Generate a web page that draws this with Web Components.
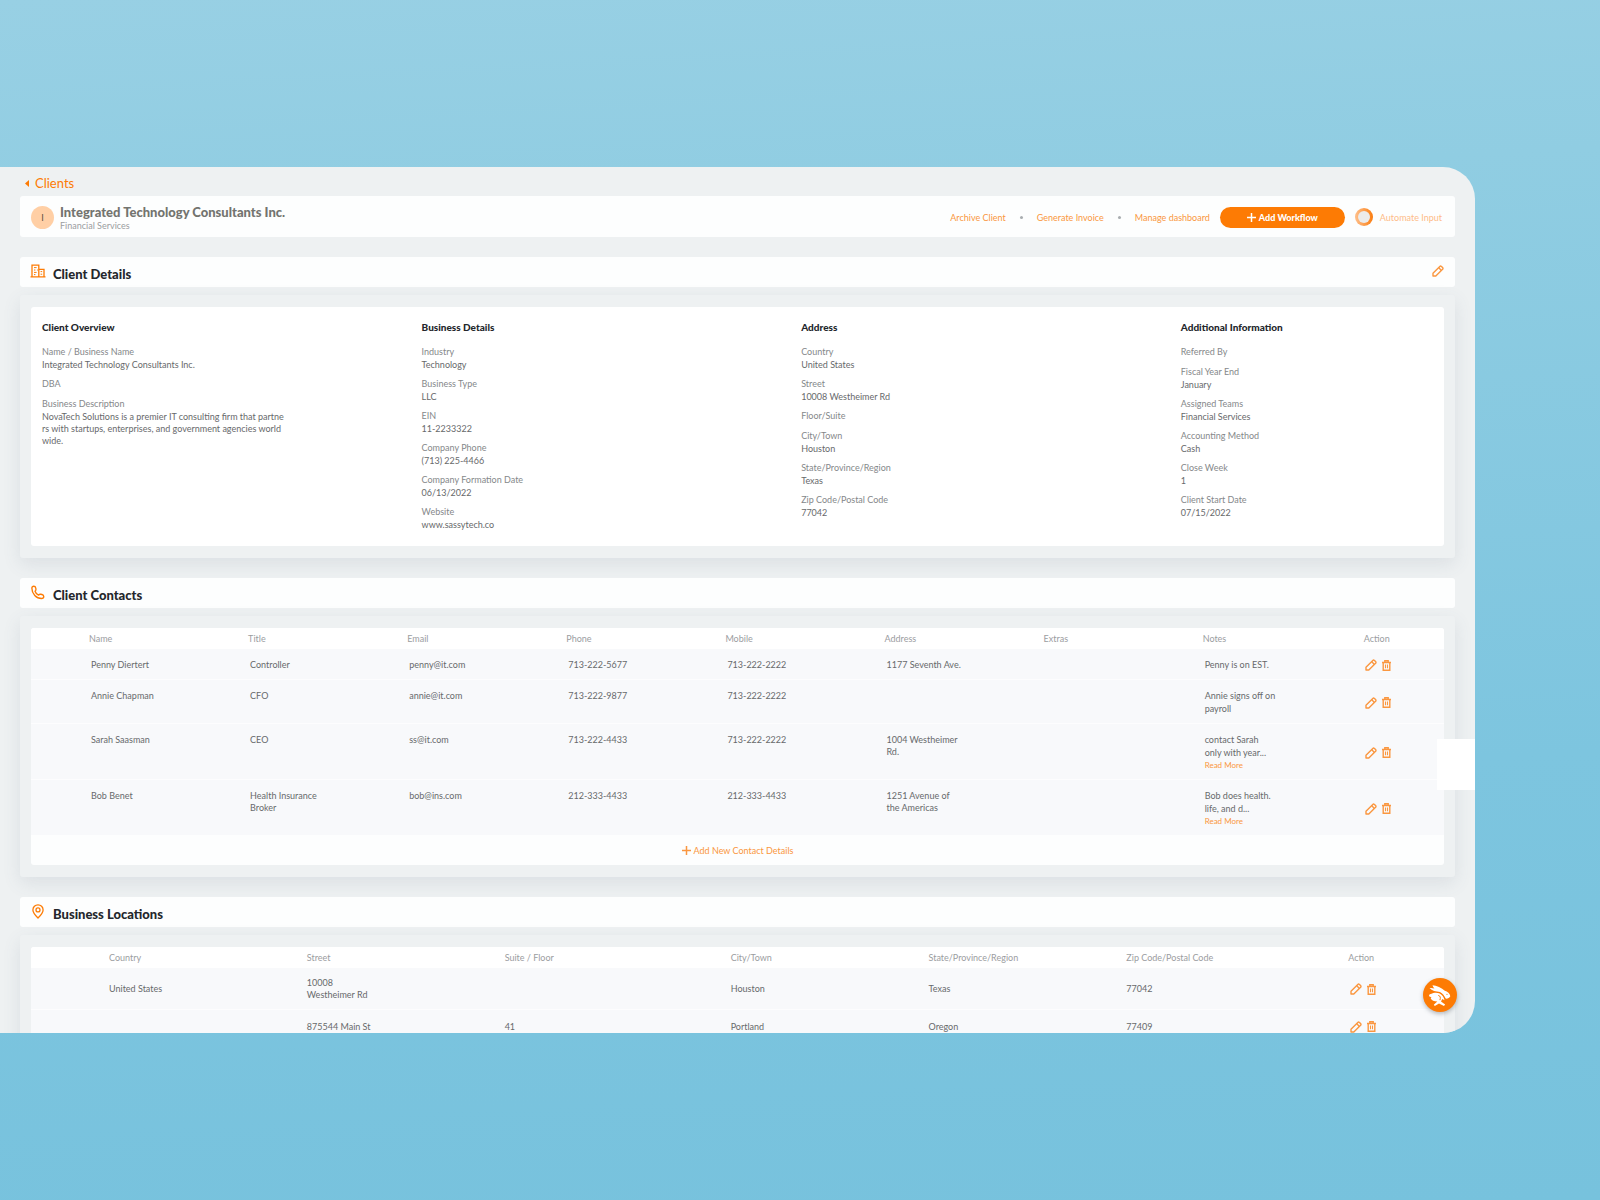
<!DOCTYPE html>
<html lang="en">
<head>
<meta charset="utf-8">
<title>Integrated Technology Consultants Inc.</title>
<style>
  :root {
    --orange: #fd7b04;
    --orange-soft: #fa9740;
    --page: #eef1f2;
    --card: #fdfefe;
    --row: #f8f9fb;
    --heading: #24272c;
    --text: #67696b;
    --label: #85888a;
    --muted: #9b9d9f;
  }

  html,
  body {
    height: 100%;
  }

  body {
    margin: 0;
    font-family: Lato, sans-serif;
    font-size: 9px;
    color: var(--text);
    background: linear-gradient(177deg, #98d0e4 0%, #90cde2 18%, #7dc5df 65%, #77c2dd 100%);
  }
</style>
</head>
<body>
<app-window>
  <client-header name="Integrated Technology Consultants Inc." team="Financial Services"></client-header>

  <section-block heading="Client Details" icon="building" editable>
    <client-details></client-details>
  </section-block>

  <section-block heading="Client Contacts" icon="phone">
    <contacts-table></contacts-table>
  </section-block>

  <section-block heading="Business Locations" icon="pin">
    <locations-table></locations-table>
  </section-block>
</app-window>

<script>
/**
 * Data shown on the client page.
 */
const details = [
  {
    title: 'Client Overview',
    items: [
      ['Name / Business Name', 'Integrated Technology Consultants Inc.'],
      ['DBA', ''],
      ['Business Description', 'NovaTech Solutions is a premier IT consulting firm that partners with startups, enterprises, and government agencies worldwide.'],
    ],
  },
  {
    title: 'Business Details',
    items: [
      ['Industry', 'Technology'],
      ['Business Type', 'LLC'],
      ['EIN', '11-2233322'],
      ['Company Phone', '(713) 225-4466'],
      ['Company Formation Date', '06/13/2022'],
      ['Website', 'www.sassytech.co'],
    ],
  },
  {
    title: 'Address',
    items: [
      ['Country', 'United States'],
      ['Street', '10008 Westheimer Rd'],
      ['Floor/Suite', ''],
      ['City/Town', 'Houston'],
      ['State/Province/Region', 'Texas'],
      ['Zip Code/Postal Code', '77042'],
    ],
  },
  {
    title: 'Additional Information',
    items: [
      ['Referred By', ''],
      ['Fiscal Year End', 'January'],
      ['Assigned Teams', 'Financial Services'],
      ['Accounting Method', 'Cash'],
      ['Close Week', '1'],
      ['Client Start Date', '07/15/2022'],
    ],
  },
];

const contacts = [
  { cells: ['Penny Diertert', 'Controller', 'penny@it.com', '713-222-5677', '713-222-2222', '1177 Seventh Ave.', ''], note: 'Penny is on EST.' },
  { cells: ['Annie Chapman', 'CFO', 'annie@it.com', '713-222-9877', '713-222-2222', '', ''], note: 'Annie signs off on payroll' },
  { cells: ['Sarah Saasman', 'CEO', 'ss@it.com', '713-222-4433', '713-222-2222', '1004 Westheimer Rd.', ''], note: 'contact Sarah only with year...', more: true },
  { cells: ['Bob Benet', 'Health Insurance Broker', 'bob@ins.com', '212-333-4433', '212-333-4433', '1251 Avenue of the Americas', ''], note: 'Bob does health. life, and d...', more: true },
];

const locations = [
  ['United States', '10008 Westheimer Rd', '', 'Houston', 'Texas', '77042'],
  ['', '875544 Main St', '41', 'Portland', 'Oregon', '77409'],
];

const icons = {
  building: `<svg viewBox="0 0 16 14" width="16" height="14" fill="none" stroke="currentColor" stroke-width="1.3">
    <path d="M.5 12.9h15M2 12.9V1.2h6.8v11.7M8.8 5.4h5.2v7.5"/>
    <path d="M4 3.6h2.6M4 6h1.4M4 8.4h2.6M4 10.6h1.4M7 6h.8M10.6 7.6h1.6M10.6 10.2h1.6" stroke-width="1"/></svg>`,
  phone: `<svg viewBox="0 0 24 24" width="15" height="15" fill="none" stroke="currentColor" stroke-width="2.2" stroke-linejoin="round">
    <path d="M3 5.2c0-2 1.3-3.2 3-3.2 1.8 0 2.9 1 3.2 2.8l.3 2.2c.2 1.5-.4 2.2-1.4 3.1.8 2.6 2.9 4.9 5.6 6 1-1.1 1.8-1.6 3.3-1.3l2.2.4c1.8.4 2.8 1.4 2.8 3.1 0 2-1.5 3.3-3.6 3.3C10.2 21.6 3 14.2 3 5.2z"/></svg>`,
  pin: `<svg viewBox="0 0 12 15" width="12" height="15" fill="none" stroke="currentColor" stroke-width="1.3" stroke-linejoin="round">
    <path d="M6 14C3 11 .9 8.7.9 5.9a5.1 5.1 0 0 1 10.2 0C11.1 8.7 9 11 6 14z"/><circle cx="6" cy="5.9" r="2"/></svg>`,
  pencil: `<svg viewBox="0 0 12 12" width="12" height="12" fill="none" stroke="currentColor" stroke-width="1.4" stroke-linejoin="round">
    <path d="M1 8.2 7.8 1.4q.8-.8 1.6 0l1.2 1.2q.8.8 0 1.6L3.8 11H1z"/><path d="m6.6 2.6 2.8 2.8"/></svg>`,
  trash: `<svg viewBox="0 0 9 11" width="9" height="11" fill="none" stroke="currentColor" stroke-width="1.4">
    <path d="M0 2.5h9M2.8 2.5V.8h3.4v1.7M1.2 2.5v7.7h6.6V2.5"/><path d="M3.5 4.6v3.6M5.5 4.6v3.6" stroke-width="1.1"/></svg>`,
  plus: `<svg viewBox="0 0 9 9" width="9" height="9" fill="none" stroke="currentColor" stroke-width="1.5"><path d="M4.5 0v9M0 4.5h9"/></svg>`,
  caret: `<svg viewBox="0 0 4 7" width="4" height="7" fill="currentColor"><path d="M4 0v7L0 3.5z"/></svg>`,
  rabbit: `<svg viewBox="0 0 34 34" width="34" height="34" fill="#fff">
    <path d="M9.5 7.2c4 .3 9.3 2.5 12.3 5.5 2.8.5 5 2.7 5.5 5.6-.8 1.7-2.7 2.5-4.6 2.3-1.1-2.7-3-5.4-5.8-6.7-3.900-.1-8-1-10.400-3.800 1.700-.3 3.300-.1 4.900.4-.9-1-1.600-2-1.900-3.300z"/>
    <path d="M6.2 18.2c-.4-1.300.3-2.300 1.700-2.200 2.500-1.500 6-1.800 8.300-.7 2.800 1.300 4.700 4 5.300 6.900l-2.200-1.300-1.300 2.500 4.100 3.200-1.100 1.300-5-2.500-4.200 2.500-1-1.200 3.500-3.300c-3.200 0-5.700-1-6.600-3.200.2-.5.4-.9.9-1.300-1 .2-1.900 0-2.400-.7z"/>
    <path d="M15.3 17.4c2.3.4 2.4 2.7 1.6 4.7" fill="none" stroke="#fd7b04"/>
    <circle cx="24" cy="16.3" r=".6" fill="#fd7b04"/></svg>`,
};

/**
 * Inline icon, picked by its name attribute.
 * @extends HTMLElement
 */
class AppIcon extends HTMLElement {
  connectedCallback() {
    this.attachShadow({ mode: 'open' }).innerHTML = `
      <style>
        :host { display: inline-flex; flex: none; }
        svg { display: block; }
      </style>
      ${icons[this.getAttribute('name')]}`;
  }
}
customElements.define('app-icon', AppIcon);

/**
 * Rounded application window with the back link and the floating controls.
 * @extends HTMLElement
 */
class AppWindow extends HTMLElement {
  connectedCallback() {
    this.attachShadow({ mode: 'open' }).innerHTML = `
      <style>
        :host {
          display: block;
          box-sizing: border-box;
          height: 100%;
          padding: 167px 125px 167px 0;
        }
        main {
          position: relative;
          box-sizing: border-box;
          height: 100%;
          padding: 0 20px;
          overflow: hidden;
          border-radius: 0 32px 32px 0;
          background: var(--page);
        }
        nav {
          display: flex;
          padding: 8px 5px 5px;
          line-height: 16px;
        }
        a {
          display: flex;
          align-items: center;
          gap: 6px;
          color: var(--orange);
          font-size: 13px;
          text-decoration: none;
        }
        .drawer {
          position: absolute;
          top: 572px;
          right: 0;
          width: 38px;
          height: 51px;
          border: 0;
          background: #fff;
        }
        .help {
          position: absolute;
          right: 18px;
          bottom: 21px;
          width: 34px;
          height: 34px;
          padding: 0;
          border: 0;
          border-radius: 50%;
          background: var(--orange);
          box-shadow: 0 2px 4px rgba(60, 70, 80, 0.35);
          cursor: pointer;
        }
      </style>
      <main>
        <nav><a href="#clients"><app-icon name="caret"></app-icon>Clients</a></nav>
        <slot></slot>
        <button class="drawer" type="button" aria-label="Open drawer"></button>
        <button class="help" type="button" aria-label="Help"><app-icon name="rabbit"></app-icon></button>
      </main>`;
  }
}
customElements.define('app-window', AppWindow);

/**
 * Title card with the client's name and the page actions.
 * @extends HTMLElement
 */
class ClientHeader extends HTMLElement {
  connectedCallback() {
    const name = this.getAttribute('name');
    this.attachShadow({ mode: 'open' }).innerHTML = `
      <style>
        :host {
          display: flex;
          align-items: center;
          height: 40px;
          padding: 1px 11px 0;
          border-radius: 3px;
          background: var(--card);
        }
        .avatar {
          width: 23px;
          margin-right: 6px;
          border-radius: 50%;
          background: #ffcfa5;
          color: #5c5040;
          line-height: 23px;
          text-align: center;
        }
        .who {
          flex: 1;
          padding-top: 2px;
        }
        h1 {
          margin: 0;
          color: #73746f;
          font-size: 13px;
          font-weight: 900;
          line-height: 16px;
        }
        p {
          margin: 0;
          color: var(--muted);
          line-height: 12px;
        }
        .links {
          display: flex;
          align-items: center;
          margin: 0 10px;
        }
        a {
          color: var(--orange-soft);
          text-decoration: none;
        }
        i {
          width: 3px;
          height: 3px;
          margin: 0 14px;
          border-radius: 50%;
          background: #a9adb0;
        }
        button {
          display: flex;
          align-items: center;
          justify-content: center;
          gap: 3px;
          width: 125px;
          height: 21px;
          padding: 0;
          border: 0;
          border-radius: 11px;
          background: var(--orange);
          color: #fff;
          font: 900 9px Lato, sans-serif;
        }
        label {
          display: flex;
          align-items: center;
          gap: 7px;
          margin-left: 10px;
          padding-right: 2px;
        }
        input {
          appearance: none;
          box-sizing: border-box;
          width: 18px;
          height: 18px;
          margin: 0;
          border: 3px solid transparent;
          border-radius: 50%;
          background: linear-gradient(#ecebea, #ecebea) padding-box, linear-gradient(90deg, #ffc08c, #fb7d10) border-box;
        }
        label span { color: #fdbc88; }
      </style>
      <div class="avatar">${name[0]}</div>
      <div class="who">
        <h1>${name}</h1>
        <p>${this.getAttribute('team')}</p>
      </div>
      <div class="links">
        <a href="#archive">Archive Client</a><i></i>
        <a href="#invoice">Generate Invoice</a><i></i>
        <a href="#dashboard">Manage dashboard</a>
      </div>
      <button type="button"><app-icon name="plus"></app-icon>Add Workflow</button>
      <label><input type="checkbox"><span>Automate Input</span></label>`;
  }
}
customElements.define('client-header', ClientHeader);

/**
 * Section title bar with a raised panel below it.
 * @extends HTMLElement
 */
class SectionBlock extends HTMLElement {
  connectedCallback() {
    this.attachShadow({ mode: 'open' }).innerHTML = `
      <style>
        :host {
          display: block;
          margin-top: 20px;
        }
        header {
          display: flex;
          align-items: center;
          height: 30px;
          padding: 0 11px 0 10px;
          border-radius: 3px;
          background: var(--card);
          color: var(--orange);
        }
        .icon {
          display: flex;
          justify-content: center;
          width: 15px;
          margin-right: 8px;
          padding-bottom: 2px;
        }
        h2 {
          flex: 1;
          margin: 0;
          padding-top: 3px;
          color: var(--heading);
          font-size: 13px;
          font-weight: 900;
          line-height: 16px;
        }
        button {
          padding: 0;
          border: 0;
          background: none;
          color: var(--orange-soft);
        }
        .panel {
          margin-top: 8px;
          padding: 12px 11px;
          border-radius: 3px;
          background: var(--page);
          box-shadow: 0 6px 18px rgba(80, 95, 120, 0.12);
        }
      </style>
      <header>
        <span class="icon"><app-icon name="${this.getAttribute('icon')}"></app-icon></span>
        <h2>${this.getAttribute('heading')}</h2>
        ${this.hasAttribute('editable') ? '<button type="button" aria-label="Edit"><app-icon name="pencil"></app-icon></button>' : ''}
      </header>
      <div class="panel"><slot></slot></div>`;
  }
}
customElements.define('section-block', SectionBlock);

/**
 * Four columns of label and value pairs.
 * @extends HTMLElement
 */
class ClientDetails extends HTMLElement {
  connectedCallback() {
    this.attachShadow({ mode: 'open' }).innerHTML = `
      <style>
        :host {
          display: grid;
          grid-template-columns: repeat(4, 1fr);
          column-gap: 9%;
          padding: 12px 9px 9px 11px;
          border-radius: 3px;
          background: #fff;
        }
        h3 {
          margin: 0 0 10px;
          color: var(--heading);
          font-size: 10px;
          font-weight: 900;
          line-height: 16px;
        }
        dl { margin: 0; }
        dt {
          color: var(--label);
          line-height: 14px;
        }
        dd {
          max-width: 244px;
          margin: 0 0 6px;
          line-height: 12px;
          word-break: break-all;
        }
      </style>
      ${details.map(({ title, items }) => `
        <section>
          <h3>${title}</h3>
          <dl>${items.map(([label, value]) => `<dt>${label}</dt><dd>${value}</dd>`).join('')}</dl>
        </section>`).join('')}`;
  }
}
customElements.define('client-details', ClientDetails);

const tableStyles = `
  :host {
    display: block;
    overflow: hidden;
    border-radius: 3px;
    background: var(--card);
  }
  table {
    width: 100%;
    border-collapse: collapse;
    table-layout: fixed;
  }
  th {
    box-sizing: border-box;
    height: 21px;
    padding: 0 0 0 var(--inset);
    background: #fff;
    color: var(--muted);
    font-weight: 400;
    text-align: left;
    white-space: nowrap;
  }
  td {
    background: var(--row);
    line-height: 12px;
  }
  tr + tr td { border-top: 1px solid #fdfdfe; }
  .actions {
    display: flex;
    align-items: center;
    gap: 5px;
  }
  button {
    display: inline-flex;
    align-items: center;
    padding: 0;
    border: 0;
    background: none;
    color: var(--orange-soft);
    font: 9px Lato, sans-serif;
    cursor: pointer;
  }`;

const actions = `
  <div class="actions">
    <button type="button" aria-label="Edit"><app-icon name="pencil"></app-icon></button>
    <button type="button" aria-label="Delete"><app-icon name="trash"></app-icon></button>
  </div>`;

/**
 * Table of the client's contacts.
 * @extends HTMLElement
 */
class ContactsTable extends HTMLElement {
  connectedCallback() {
    const heads = ['Name', 'Title', 'Email', 'Phone', 'Mobile', 'Address', 'Extras', 'Notes', 'Action'];
    this.attachShadow({ mode: 'open' }).innerHTML = `
      <style>
        ${tableStyles}
        :host { --inset: 58px; }
        th { width: 11.26%; }
        th:last-child { width: auto; padding-left: 60px; }
        td {
          padding: 10px 23px 8px 60px;
          vertical-align: top;
        }
        td.note {
          padding: 9px 27px 8px 60px;
          line-height: 13px;
        }
        td:last-child {
          padding-right: 0;
          padding-left: 61px;
          vertical-align: middle;
        }
        .note a {
          display: block;
          color: var(--orange-soft);
          font-size: 8px;
          line-height: 12px;
          text-decoration: none;
        }
        .add {
          gap: 3px;
          justify-content: center;
          width: 100%;
          height: 30px;
        }
      </style>
      <table>
        <thead><tr>${heads.map((head) => `<th>${head}</th>`).join('')}</tr></thead>
        <tbody>${contacts.map(({ cells, note, more }) => `
          <tr>
            ${cells.map((cell) => `<td>${cell}</td>`).join('')}
            <td class="note">${note}${more ? '<a href="#notes">Read More</a>' : ''}</td>
            <td>${actions}</td>
          </tr>`).join('')}
        </tbody>
      </table>
      <button class="add" type="button"><app-icon name="plus"></app-icon>Add New Contact Details</button>`;
  }
}
customElements.define('contacts-table', ContactsTable);

/**
 * Table of the client's offices.
 * @extends HTMLElement
 */
class LocationsTable extends HTMLElement {
  connectedCallback() {
    const heads = ['Country', 'Street', 'Suite / Floor', 'City/Town', 'State/Province/Region', 'Zip Code/Postal Code', 'Action'];
    this.attachShadow({ mode: 'open' }).innerHTML = `
      <style>
        ${tableStyles}
        :host { --inset: 78px; }
        th { width: 14%; }
        th:nth-child(3) { width: 16%; }
        th:nth-child(6) { width: 15.7%; }
        th:last-child { width: auto; }
        td {
          height: 15px;
          padding: 9px 48px 8px 78px;
          vertical-align: middle;
        }
        td:last-child {
          padding-right: 0;
          padding-left: 80px;
        }
      </style>
      <table>
        <thead><tr>${heads.map((head) => `<th>${head}</th>`).join('')}</tr></thead>
        <tbody>${locations.map((cells) => `
          <tr>
            ${cells.map((cell) => `<td>${cell}</td>`).join('')}
            <td>${actions}</td>
          </tr>`).join('')}
        </tbody>
      </table>`;
  }
}
customElements.define('locations-table', LocationsTable);
</script>
</body>
</html>
